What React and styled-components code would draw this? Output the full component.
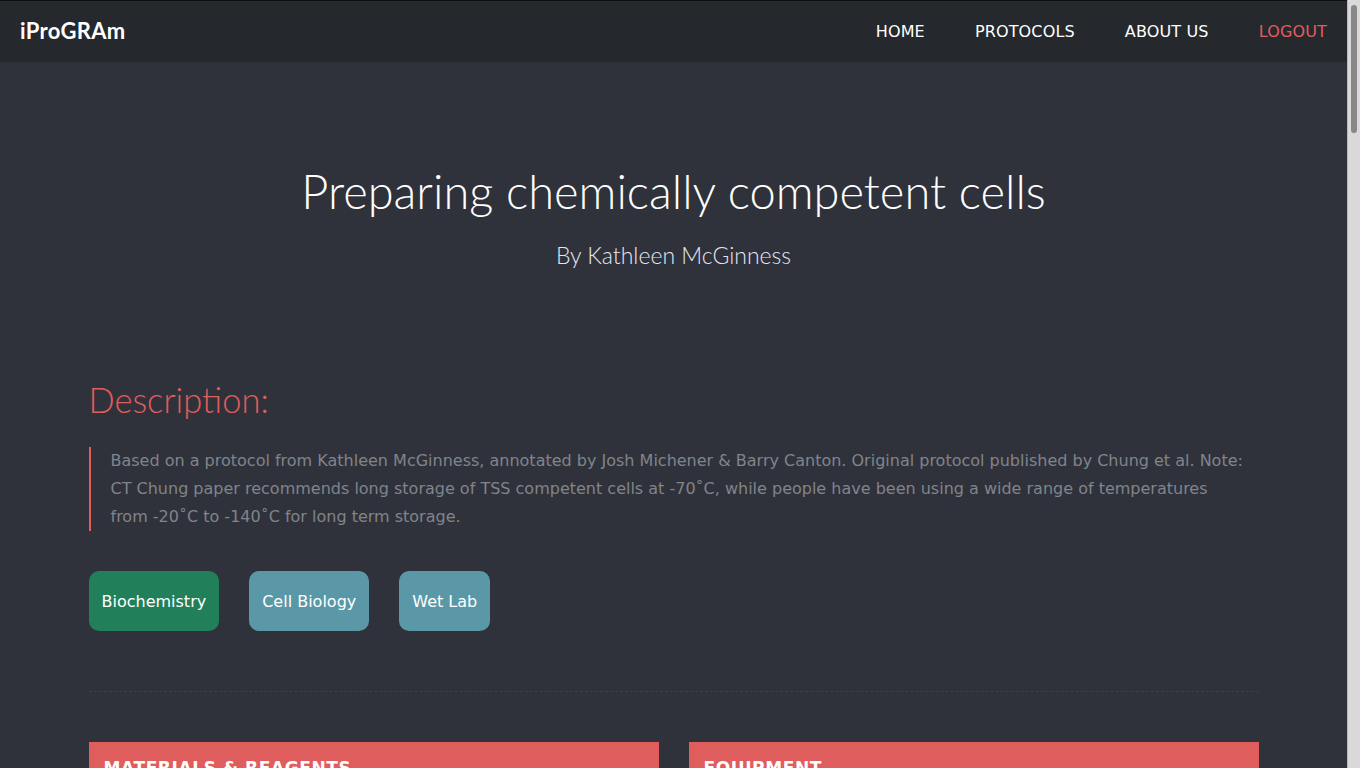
import React from 'react';
import styled, { createGlobalStyle } from 'styled-components';

const GlobalStyle = createGlobalStyle`
    html, body {
        margin: 0;
        padding: 0;
        background: #2f323a;
        overflow: hidden;
    }
    body {
        font-family: "DejaVu Sans", sans-serif;
        color: #ffffff;
    }
`;

const Page = styled.div`
    display: flex;
    height: 100vh;
`;

const Content = styled.div`
    flex: 1;
    min-width: 0;
    overflow: hidden;
`;

// window scrollbar as it shows in the screenshot
const ScrollRail = styled.div`
    width: 12px;
    flex-shrink: 0;
    background: #d9d9d9;
    border-left: 1px solid #b9b9b9;
`;

const ScrollThumb = styled.div`
    width: 6px;
    height: 128px;
    margin: 5px 0 0 3px;
    border-radius: 3px;
    background: #878787;
`;

const Navbar = styled.nav`
    display: flex;
    align-items: center;
    justify-content: space-between;
    height: 61px;
    border-top: 1px solid #0e0f11;
    background: #25282d;
    padding: 0 20px;
`;

const Brand = styled.a`
    font-family: Lato, sans-serif;
    font-weight: 700;
    font-size: 22px;
    letter-spacing: 0.3px;
    color: #ffffff;
    text-decoration: none;
    margin-top: -3px;
`;

const NavList = styled.ul`
    display: flex;
    gap: 50px;
    margin: 0;
    padding: 0;
    list-style: none;
`;

const NavItem = styled.li`
    font-size: 16px;
    letter-spacing: 0.15px;
    color: ${props => props.logout ? '#e05d5d' : '#ffffff'};
`;

const Hero = styled.header`
    display: flex;
    flex-direction: column;
    align-items: center;
    padding-top: 99px;
`;

const Title = styled.h1`
    margin: 0;
    font-family: Lato, sans-serif;
    font-weight: 300;
    font-size: 47px;
    line-height: 60px;
    color: #ffffff;
`;

const Author = styled.p`
    margin: 20px 0 0;
    font-family: Lato, sans-serif;
    font-weight: 300;
    font-size: 23px;
    color: #e6e6f2;
`;

const Container = styled.main`
    width: 1170px;
    margin: 0 auto;
    padding: 109px 0 120px;
`;

const SectionTitle = styled.h2`
    margin: 0;
    font-family: Lato, sans-serif;
    font-weight: 300;
    font-size: 34.5px;
    line-height: 44px;
    color: #e05d5d;
`;

const Quote = styled.blockquote`
    margin: 25px 0 0;
    padding: 0 15px 0 20px;
    border-left: 2px solid #e05d5d;
    font-size: 16px;
    line-height: 28px;
    color: #80848b;
`;

const Tags = styled.div`
    display: flex;
    gap: 30px;
    margin-top: 40px;
`;

const Tag = styled.span`
    display: flex;
    align-items: center;
    height: 60px;
    padding: 0 13px;
    border-radius: 10px;
    font-size: 16px;
    color: #ffffff;
    background: ${props => props.primary ? '#218059' : '#5a98a8'};
`;

const Divider = styled.hr`
    margin: 60px 0 50px;
    border: 0;
    border-top: 1px dashed #3c3f47;
`;

const Columns = styled.div`
    display: grid;
    grid-template-columns: 1fr 1fr;
    gap: 30px;
`;

const Card = styled.section`
    background: #e05d5d;
    min-height: 400px;
`;

const CardHeader = styled.h3`
    margin: 0;
    padding: 16px 15px;
    font-size: 17px;
    font-weight: 700;
    letter-spacing: 0.6px;
    color: #ffffff;
`;

const App = () => {
    return (
        <Page>
            <GlobalStyle />
            <Content>
                <Navbar>
                    <Brand href="#">iProGRAm</Brand>
                    <NavList>
                        <NavItem>HOME</NavItem>
                        <NavItem>PROTOCOLS</NavItem>
                        <NavItem>ABOUT US</NavItem>
                        <NavItem logout>LOGOUT</NavItem>
                    </NavList>
                </Navbar>
                <Hero>
                    <Title>Preparing chemically competent cells</Title>
                    <Author>By Kathleen McGinness</Author>
                </Hero>
                <Container>
                    <SectionTitle>Description:</SectionTitle>
                    <Quote>
                        Based on a protocol from Kathleen McGinness, annotated by Josh Michener &amp; Barry Canton. Original protocol published by Chung et al. Note: CT Chung paper recommends long storage of TSS competent cells at -70˚C, while people have been using a wide range of temperatures from -20˚C to -140˚C for long term storage.
                    </Quote>
                    <Tags>
                        <Tag primary>Biochemistry</Tag>
                        <Tag>Cell Biology</Tag>
                        <Tag>Wet Lab</Tag>
                    </Tags>
                    <Divider />
                    <Columns>
                        <Card><CardHeader>MATERIALS &amp; REAGENTS</CardHeader></Card>
                        <Card><CardHeader>EQUIPMENT</CardHeader></Card>
                    </Columns>
                </Container>
            </Content>
            <ScrollRail>
                <ScrollThumb />
            </ScrollRail>
        </Page>
    );
};

export default App;
